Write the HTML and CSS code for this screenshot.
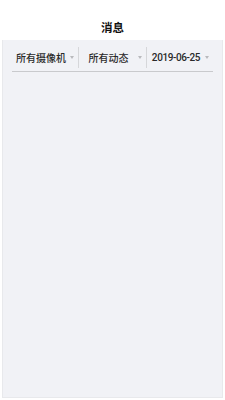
FILE: index.html
```html
<!DOCTYPE html>
<html>
<head>
<meta charset="utf-8">
<link rel="stylesheet" href="styles.css">
</head>
<body>
<div class="app">
  <header class="header">消息</header>
  <main class="content">
    <div class="filters">
      <div class="filter"><span class="label">所有摄像机</span><span class="arrow"></span></div>
      <div class="filter"><span class="label">所有动态</span><span class="arrow"></span></div>
      <div class="filter"><span class="label date">2019-06-25</span><span class="arrow"></span></div>
    </div>
  </main>
</div>
</body>
</html>
```
FILE: styles.css
```css
html, body {
  margin: 0;
  padding: 0;
}
body {
  width: 225px;
  height: 400px;
  overflow: hidden;
  font-family: Roboto, "Noto Sans CJK SC", sans-serif;
  background: #ffffff;
}
.app {
  display: flex;
  flex-direction: column;
  height: 400px;
}
.header {
  height: 40px;
  box-sizing: border-box;
  padding-top: 20px;
  text-align: center;
  font-size: 11.5px;
  font-weight: bold;
  color: #111;
  line-height: 16px;
}
.content {
  flex: 1;
  background: #f1f2f6;
  margin: 0 2px 2px;
  border-left: 1px solid #e8e9ec;
  border-right: 1px solid #e8e9ec;
  border-bottom: 1px solid #e8e9ec;
  padding: 4px 9px 0;
}
.filters {
  display: grid;
  grid-template-columns: 67px 68px 1fr;
  height: 27px;
  border-bottom: 1px solid #c9cacd;
  align-items: center;
}
.filter {
  display: flex;
  align-items: center;
  height: 21px;
  border-right: 1px solid #d6d7da;
}
.filter:last-child {
  border-right: none;
}
.label {
  flex: 1;
  text-align: center;
  font-size: 10px;
  font-weight: 500;
  color: #2a2a2a;
  white-space: nowrap;
}
.date {
  letter-spacing: -0.4px;
}
.arrow {
  width: 0;
  height: 0;
  border-left: 2.5px solid transparent;
  border-right: 2.5px solid transparent;
  border-top: 3px solid #b9babd;
  margin-right: 4px;
}
```
